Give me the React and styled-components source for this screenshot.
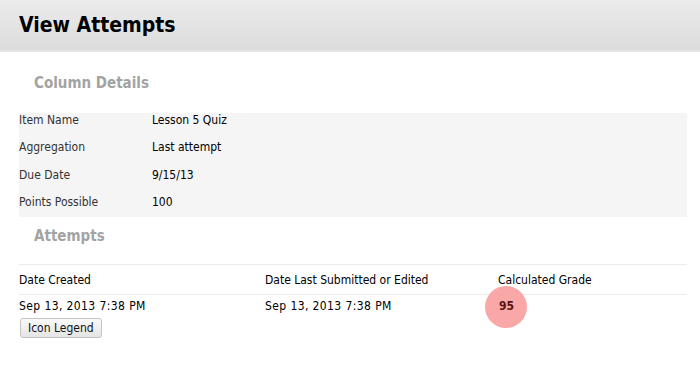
import React from "react";
import styled, { createGlobalStyle } from "styled-components";

const Global = createGlobalStyle`
  html, body { margin: 0; padding: 0; background: #fff; }
  body { font-family: "DejaVu Sans Condensed", "DejaVu Sans", sans-serif; font-stretch: semi-condensed; color: #000; }
`;

const Header = styled.header`
  height: 50px;
  background: linear-gradient(#ebebeb, #dcdcdc);
  border-bottom: 2px solid #e4e4e4;
  display: flex;
  align-items: center;
  padding: 0 19px;
`;

const Title = styled.h1`
  margin: 0;
  font-size: 21px;
  font-weight: bold;
  color: #000;
`;

const Content = styled.main`
  padding: 0 13px 0 19px;
`;

const SectionTitle = styled.h2`
  margin: 0;
  padding: ${(p) => p.$pt}px 0 0 15px;
  font-size: 15px;
  line-height: 18px;
  font-weight: bold;
  color: #a3a3a3;
  height: ${(p) => p.$h}px;
  box-sizing: border-box;
`;

const Details = styled.dl`
  margin: 0;
  background: #f5f5f5;
  display: grid;
  grid-template-columns: 133px 1fr;
  grid-auto-rows: 27.3px;
  align-items: start;
  line-height: 14px;
  font-size: 12px;
  height: 104px;
  box-sizing: border-box;
`;

const Term = styled.dt`
  color: #333;
`;

const Value = styled.dd`
  margin: 0;
  color: #000;
`;

const Table = styled.div`
  border-top: 1px solid #ebebeb;
  font-size: 12px;
`;

const Row = styled.div`
  display: grid;
  grid-template-columns: 246px 233px 1fr;
  align-items: center;
  height: ${(p) => p.$h}px;
  border-bottom: ${(p) => (p.$line ? "1px solid #ebebeb" : "none")};
  box-sizing: border-box;
`;

const Cell = styled.div`
  color: #000;
  letter-spacing: ${(p) => (p.$wide ? "0.4px" : "0")};
`;

const GradeCell = styled.div`
  position: relative;
`;

const GradeBubble = styled.span`
  position: absolute;
  left: -13px;
  top: 50%;
  width: 42px;
  height: 42px;
  margin-top: -20px;
  border-radius: 50%;
  background: #f9a7a7;
`;

const GradeText = styled.span`
  position: relative;
  font-weight: bold;
  color: #5a1414;
  padding-left: 1px;
`;

const Button = styled.button`
  font-family: inherit;
  font-stretch: inherit;
  font-size: 12px;
  color: #111;
  height: 20px;
  padding: 0 7px;
  border: 1px solid #c4c4c4;
  border-radius: 3px;
  background: linear-gradient(#fafafa, #e4e4e4);
  margin-left: 1px;
`;

export default function App() {
  return (
    <>
      <Global />
      <Header>
        <Title>View Attempts</Title>
      </Header>
      <Content>
        <SectionTitle $h={61} $pt={22}>Column Details</SectionTitle>
        <Details>
          <Term>Item Name</Term>
          <Value>Lesson 5 Quiz</Value>
          <Term>Aggregation</Term>
          <Value>Last attempt</Value>
          <Term>Due Date</Term>
          <Value>9/15/13</Value>
          <Term>Points Possible</Term>
          <Value>100</Value>
        </Details>
        <SectionTitle $h={47} $pt={10}>Attempts</SectionTitle>
        <Table>
          <Row $h={30} $line>
            <Cell>Date Created</Cell>
            <Cell>Date Last Submitted or Edited</Cell>
            <Cell>Calculated Grade</Cell>
          </Row>
          <Row $h={22}>
            <Cell $wide>Sep 13, 2013 7:38 PM</Cell>
            <Cell $wide>Sep 13, 2013 7:38 PM</Cell>
            <GradeCell>
              <GradeBubble />
              <GradeText>95</GradeText>
            </GradeCell>
          </Row>
        </Table>
        <Button>Icon Legend</Button>
      </Content>
    </>
  );
}
